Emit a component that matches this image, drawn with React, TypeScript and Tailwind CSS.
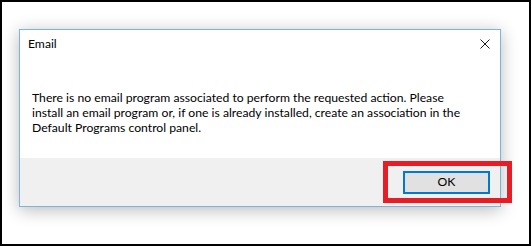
import { useState } from "react";

function CloseIcon() {
  return (
    <svg width="10" height="10" viewBox="0 0 10 10" className="mt-[3px]">
      <path d="M0.5 0.5 L9.5 9.5 M9.5 0.5 L0.5 9.5" stroke="#1a1a1a" strokeWidth="1" fill="none" />
    </svg>
  );
}

export default function App() {
  const [open] = useState(true);
  const font = { fontFamily: 'Lato, "Noto Sans", sans-serif' };

  return (
    <div
      className="relative box-border h-[246px] w-[531px] overflow-hidden border-2 border-black bg-white text-[12.2px] text-black"
      style={font}
    >
      {open && (
        <div className="ml-[17px] mt-[27px] flex h-[178px] w-[482px] flex-col border border-[#7fb2e0] bg-white shadow-[0_3px_16px_rgba(0,0,0,0.28)]">
          <div className="flex items-start justify-between pl-[8px] pr-[10px] pt-[6px]">
            <span className="leading-[16px]">Email</span>
            <CloseIcon />
          </div>
          <div className="flex-1 whitespace-nowrap pl-[12px] pt-[38px] leading-[15px]">
            <div>There is no email program associated to perform the requested action. Please</div>
            <div>install an email program or, if one is already installed, create an association in the</div>
            <div>Default Programs control panel.</div>
          </div>
          <div className="flex h-[48px] justify-end bg-[#f0f0f0] pr-[10px] pt-[13px]">
            <button className="box-border h-[23px] w-[87px] border-2 border-[#0078d7] bg-[#e1e1e1] text-[12.2px] leading-none text-black">
              OK
            </button>
          </div>
        </div>
      )}
      {/* highlight around the OK button */}
      <div className="pointer-events-none absolute left-[381px] top-[159px] h-[42px] w-[129px] border-[5px] border-[#e81c24]" />
    </div>
  );
}
